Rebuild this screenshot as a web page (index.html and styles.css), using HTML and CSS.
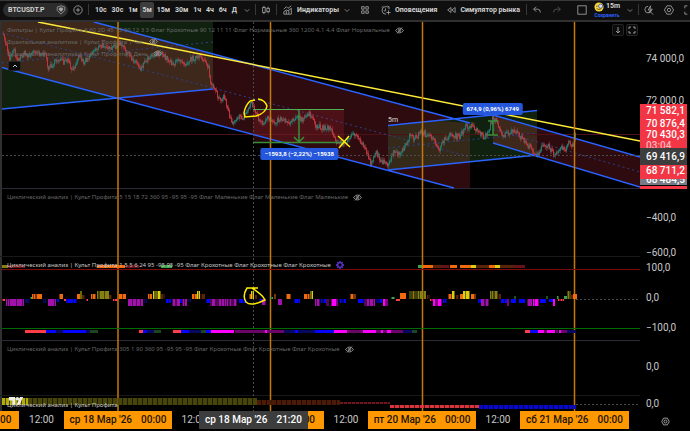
FILE: index.html
```html
<!DOCTYPE html>
<html lang="ru">
<head>
<meta charset="utf-8">
<title>BTCUSDT.P</title>
<link rel="stylesheet" href="styles.css">
</head>
<body>
<svg class="defs" aria-hidden="true">
  <symbol id="eye" viewBox="0 0 18 14"><path d="M1 7Q9-3 17 7Q9 17 1 7Z"/><circle cx="9" cy="7" r="2.5"/><path d="M4 13L14 1"/></symbol>
  <symbol id="chevron" viewBox="0 0 8 8"><path d="M1 3l3 3 3-3"/></symbol>
</svg>

<header class="toolbar">
  <button class="symbol"><span>BTCUSDT.P</span>
    <svg viewBox="0 0 12 12"><path d="M6 1l4.5 1.5v4L6 11 1.500 6.500v-4z"/><path class="solid" d="M3 5l1.500-2h3L9 5 6 8.500z"/></svg></button>
  <button aria-label="Добавить"><svg viewBox="0 0 12 12"><circle cx="6" cy="6" r="5"/><path d="M6 3.500v5M3.500 6h5"/></svg></button>
  <i class="divider"></i>
  <nav class="intervals">
    <button>10с</button><button>30с</button><button>1м</button><button class="active">5м</button><button>15м</button><button>30м</button><button>1ч</button><button>4ч</button><button>6ч</button><button>Д</button>
  </nav>
  <button class="chevron" aria-label="Интервалы"><svg><use href="#chevron"/></svg></button>
  <i class="divider"></i>
  <button aria-label="Свечи"><svg viewBox="0 0 12 12"><path d="M3.500 1v10M8.500 2v8"/><rect class="fill" x="2" y="3" width="3" height="6"/><rect class="fill" x="7" y="4" width="3" height="4"/></svg></button>
  <i class="divider"></i>
  <button class="labelled"><svg viewBox="0 0 12 12"><path d="M1 11V8l3-2 2 1 4-3v7zM1 5l3-3 2 2 4-3M4 7v4M7 7v4"/></svg><span>Индикаторы</span></button>
  <button class="chevron" aria-label="Избранные индикаторы"><svg><use href="#chevron"/></svg></button>
  <button aria-label="Шаблоны"><svg viewBox="0 0 12 12"><path d="M2 2h3v3H2zM7 2h3v3H7zM2 7h3v3H2zM7 7h3v3H7z"/></svg></button>
  <button class="labelled"><svg viewBox="0 0 12 12"><path d="M10 5A4.500 4.500 0 1 0 6 11M5.500 4v3H3.500M1 3l2-2M8 1l2.500 2M9 6.500v5M6.500 9h5"/></svg><span>Оповещения</span></button>
  <button class="labelled replay"><svg viewBox="0 0 12 12"><path d="M6 3v6L2 6zM11 3v6L7 6z"/></svg><span>Симулятор рынка</span></button>
  <i class="divider"></i>
  <button aria-label="Отменить"><svg viewBox="0 0 12 12"><path d="M5 2L2 5l3 3M2 5h5q3 0 3 4"/></svg></button>
  <button class="muted" aria-label="Повторить"><svg viewBox="0 0 12 12"><path d="M7 2l3 3-3 3M10 5H5Q2 5 2 9"/></svg></button>
  <span class="spacer"></span>
  <button aria-label="Макет"><svg viewBox="0 0 12 12"><rect x="1" y="1" width="10" height="10"/></svg></button>
  <button class="layout">
    <span class="layout-name"><svg viewBox="0 0 12 12"><circle cx="6" cy="6" r="5.500" fill="#f6d83b" stroke="none"/><path d="M2.500 5h2M3 8q3 2 6 0" stroke="#59400a"/><circle cx="8" cy="5" r="2.500" fill="#cfe0f4" stroke="#557"/></svg>15m</span>
    <span class="save">Сохранить</span>
  </button>
  <button class="chevron" aria-label="Макеты"><svg><use href="#chevron"/></svg></button>
  <i class="divider"></i>
  <button aria-label="Быстрый поиск"><svg viewBox="0 0 12 12"><path d="M5 1.500A4 4 0 1 0 9 6M8 8.500l3 3M8 1L5 6h3L6 9l4-4H7z"/></svg></button>
  <button aria-label="Настройки"><svg viewBox="0 0 12 12"><path d="M3.500 1h5L11.500 6l-3 5h-5L.5 6z"/><circle cx="6" cy="6" r="2"/></svg></button>
  <button aria-label="Во весь экран"><svg viewBox="0 0 12 12"><path d="M1 4V1h3M8 1h3v3M11 8v3H8M4 11H1V8"/></svg></button>
</header>

<main class="workspace">
  <section class="plot" aria-label="График">
    <svg class="canvas" viewBox="0 22 640 389" preserveAspectRatio="none">
      <g class="zones">
        <path class="zone-up" d="M2 22H213V89L2 109Z"/>
        <path class="zone-down" d="M118 98L213 54 470 123V188H454Z"/>
        <path class="zone-mix" d="M2 22H94L213 54V89L118 98 2 67Z"/>
        <path class="zone-up" d="M388 126L537 111V156L388 170Z"/>
        <path class="zone-olive" d="M388 126L440 121 470 123V162L388 170Z"/>
        <path class="zone-down" d="M537 128L640 157V187L537 156Z"/>
        <path class="zone-mix" d="M493 116L537 128V156L493 143Z"/>
      </g>
      <path class="pane-line" d="M0 188.500H640M0 340.500H640"/>
      <path class="pane-line faint" d="M0 256.500H640M0 395.500H640"/>
      <path class="price-line" d="M2 134.500H640"/>
      <path class="mid" d="M2 33L213 88 470 157M2 63L213 42M388 148L537 133M493 129L640 172"/>
      <rect class="measure-fill" x="253" y="109" width="91" height="33"/>
      <g id="candles"></g>
      <path class="trend" d="M94 22L470 123M2 67.500L454 188M2 109L213 89M388 125.500L537 110.500M388 170L537 155M493 115L640 157M493 143L640 187"/>
      <path class="signal" d="M38 22L640 141"/>
      <path class="cross" d="M2 155.500H640M253.500 22V411"/>
      <path class="cross" d="M576 299.500H640M576 404.500H640"/>
      <path class="session" d="M118 22V411M270.500 22V411M422.500 22V411M574.500 22V411"/>
      <path class="measure" d="M253 109.500H344"/>
      <path class="measure thick" d="M253 142.500H344M299 110V141M294 137L299 142 304 137"/>
      <path class="measure thick" d="M488 121H498M488 135H498M493 121V135"/>
      <path class="limit-top" d="M2 269.500H640"/>
      <path class="limit-bottom" d="M2 328.500H640"/>
      <g id="cycles"></g>
      <path class="pen" d="M250 101L255 100M258 99Q265 100 267 106 266 113 256 116L245 117 244 113Q245 106 250 101"/>
      <path class="pen" d="M258 288H247Q242 296 246 302 251 307 265 300 263 295 252 288"/>
      <path class="pen" d="M338 136L350 147M349 136L339 148"/>
    </svg>

    <p class="legend" style="top:2.1%">Фильтры | Культ Профита 6 60 2D 45 15 90 12 3 3 Флаг Крохотные 90 12 11 11 Флаг Нормальные 360 1200 4,1 4,4 Флаг Нормальные<svg><use href="#eye"/></svg></p>
    <p class="legend" style="top:5.100%">Фрактальная аналитика | Культ Профита | Час<svg><use href="#eye"/></svg></p>
    <p class="legend" style="top:8.200%">Фрактальная аналитика | Культ Профита | День<svg><use href="#eye"/></svg></p>
    <p class="legend" style="top:45%">Циклический анализ | Культ Профита 5 15 18 72 360 95 -95 95 -95 Флаг Маленькие Флаг Маленькие Флаг Маленькие<svg><use href="#eye"/></svg></p>
    <p class="legend bright" style="top:62.500%">Циклический анализ | Культ Профита 1 5 5 6 24 95 -95 95 -95 Флаг Крохотные Флаг Крохотные Флаг Крохотные<svg class="loading" viewBox="0 0 12 12"><circle cx="6" cy="6" r="3.500"/><path d="M6 0v2M6 10v2M0 6h2M10 6h2M2 2l1 1M9 9l1 1M10 2L9 3M3 9l-1 1"/></svg></p>
    <p class="legend" style="top:84.100%">Циклический анализ | Культ Профита 305 1 90 360 95 -95 95 -95 Флаг Крохотные Флаг Крохотные Флаг Крохотные<svg><use href="#eye"/></svg></p>
    <svg class="brand" viewBox="0 0 16 9" role="img" aria-label="TradingView"><path d="M0 0h7v9H4V4H0z"/><circle cx="9.500" cy="2" r="2"/><path d="M12.500 0H16l-4 9H8.500z"/></svg>
    <p class="legend bright" style="top:98.500%">Циклический анализ | Культ Профита</p>

    <span class="tag" style="left:46.600%;top:34%">−1593,8 (−2,22%) −15938</span>
    <span class="tag" style="left:76.900%;top:22.400%">674,9 (0,96%) 6749</span>
    <span class="note" style="left:61.300%;top:25.200%">5m</span>
    <button class="collapse" aria-label="Свернуть"><svg viewBox="0 0 8 8"><path d="M2 5l2-2 2 2"/></svg></button>
    <div class="pane-tools">
      <button aria-label="Вниз"><svg viewBox="0 0 8 8"><path d="M4 1v6M2 5l2 2 2-2"/></svg></button>
      <button aria-label="Развернуть"><svg viewBox="0 0 8 8"><path d="M1 3V1h2M5 1h2v2M7 5v2H5M3 7H1V5"/></svg></button>
    </div>
  </section>

  <aside class="prices" aria-label="Шкала цен">
    <span style="top:9.400%">74 000,0</span>
    <span style="top:20.300%">72 000,0</span>
    <span style="top:50.400%">−400,0</span>
    <span style="top:59.400%">−600,0</span>
    <span style="top:63.200%">100,0</span>
    <span style="top:71%">0,0</span>
    <span style="top:78.700%">−100,0</span>
    <span style="top:88.800%">0,0</span>
    <span style="top:98.100%">0,0</span>
    <div class="quotes">
      <b>71 582,1</b><b>70 876,4</b><b>70 430,3</b><b class="timer">03:04</b><b class="cursor">69 416,9</b><b>68 711,2</b><b class="gray">68 484,5</b><b class="edge"></b>
    </div>
  </aside>

  <footer class="times">
    <b class="first">00</b><span>12:00</span><b>ср 18 Мар '26<em>00:00</em></b><span>12:00</span><b class="last">00:00</b><span>12:00</span><b>пт 20 Мар '26<em>00:00</em></b><span>12:00</span><b>сб 21 Мар '26<em>00:00</em></b>
    <strong class="cursor-time">ср 18 Мар '26<em>21:20</em></strong>
  </footer>
  <button class="axis-settings" aria-label="Настройки шкалы"><svg viewBox="0 0 12 12"><path d="M3.500 1.500h5L11 6l-2.500 4.500h-5L1 6z"/><circle cx="6" cy="6" r="2"/></svg></button>
</main>
<script src="script.js"></script>
</body>
</html>
```
FILE: styles.css
```css
* { box-sizing: border-box; }
body {
  margin: 0;
  height: 100vh;
  display: flex;
  flex-direction: column;
  background: #000;
  color: #c8c8c8;
  font-family: Roboto, "Noto Sans", sans-serif;
  font-size: 7px;
  overflow: hidden;
}
.defs { position: absolute; width: 0; height: 0; }
svg { fill: none; stroke: currentColor; stroke-width: 1; }
button {
  border: 0;
  margin: 0;
  padding: 0;
  background: none;
  color: inherit;
  font: inherit;
  display: flex;
  align-items: center;
  justify-content: center;
}
p { margin: 0; }
em { font-style: normal; }

/* Toolbar */
.toolbar {
  display: flex;
  align-items: center;
  flex: none;
  height: 22px;
  padding: 0 0 2px 3px;
  background: #0f0f0f;
  border-top: 1px solid #3a3a3a;
  border-bottom: 2px solid #303030;
  font-weight: 700;
  color: #d2d2d2;
  white-space: nowrap;
  overflow: hidden;
}
.toolbar > * { flex: none; }
.toolbar > button { width: 20px; height: 14px; }
.toolbar svg { width: 10px; height: 10px; color: #a4a4a4; }
.toolbar .solid { fill: currentColor; stroke: none; }
.toolbar .fill { fill: #0f0f0f; }
.toolbar .symbol {
  width: 65px;
  padding: 0 2px 0 5px;
  justify-content: space-between;
  background: #2c2c2c;
  border-radius: 7px;
}
.divider { width: 1px; height: 11px; background: #383838; }
.intervals { display: flex; width: 150px; padding-left: 4px; justify-content: space-between; }
.intervals button { height: 16px; padding: 0 2px; border-radius: 2px; }
.intervals .active { background: #3d3d3d; }
.toolbar .chevron { width: 16px; }
.toolbar .chevron svg { width: 6px; height: 6px; }
.toolbar .labelled { width: auto; gap: 4px; padding-left: 6px; }
.toolbar .replay { padding: 0 6px 0 9px; }
.toolbar .muted { opacity: .5; }
.toolbar > .spacer { flex: 1 1 auto; }
.toolbar .layout { width: 30px; height: 18px; flex-direction: column; }
.toolbar > :last-child { margin-right: -9px; }
.layout-name { display: flex; align-items: center; gap: 2px; line-height: 9px; }
.save { color: #2962ff; font-size: 5px; line-height: 6px; }

/* Workspace */
.workspace {
  flex: 1;
  min-height: 0;
  display: grid;
  grid-template: minmax(0, 1fr) 20px / minmax(0, 1fr) 50px;
}
.plot { position: relative; border-left: 2px solid #303030; }
.canvas { position: absolute; inset: 0 0 0 -2px; width: calc(100% + 2px); height: 100%; stroke: none; }
.zone-up { fill: #10220f; }
.zone-down { fill: #2e0b0f; }
.zone-mix { fill: #3d281b; }
.zone-olive { fill: #35291a; }
.pane-line { stroke: #2a2a38; }
.faint { stroke: #191919; }
.price-line { stroke: #4c1218; }
.mid { stroke: #2b408e; stroke-dasharray: 2 3; }
.trend { stroke: #2962ff; stroke-width: 1.5; }
.signal { stroke: #ffeb3b; stroke-width: 1.5; }
.cross { stroke: #4c4c4c; stroke-dasharray: 2 2; }
.session { stroke: #c87808; stroke-width: 1.5; }
.measure { stroke: #4caf50; }
.thick { stroke: #388e3c; stroke-width: 1.5; }
.measure-fill { fill: #f23645; opacity: .15; }
.limit-top { stroke: #7b0b0b; }
.limit-bottom { stroke: #006b00; }
.pen { stroke: #ffee00; stroke-width: 1.5; }

.legend {
  position: absolute;
  left: 5px;
  display: flex;
  align-items: center;
  gap: 5px;
  transform: translateY(-50%);
  white-space: nowrap;
  line-height: 10px;
  font-family: "Noto Sans", sans-serif;
  font-size: 6px;
  color: #686868;
}
.legend svg { width: 9px; height: 7px; stroke-width: 2; color: #8c8c8c; }
.legend .loading { width: 8px; height: 8px; color: #5b35d5; }
.legend.bright { color: #c8c8c8; }
.tag {
  position: absolute;
  transform: translate(-50%, -50%);
  padding: 0 4px;
  border-radius: 2px;
  background: #2457dc;
  color: #fff;
  font-size: 6px;
  font-weight: 700;
  line-height: 12px;
  white-space: nowrap;
}
.note { position: absolute; transform: translate(-50%, -50%); color: #ddd; font-size: 7px; }
.collapse, .pane-tools button { background: #0b0b0b; border: 1px solid #252525; border-radius: 2px; }
.collapse { position: absolute; left: 6px; top: 10%; width: 13px; height: 10px; }
.collapse svg, .pane-tools svg { width: 8px; height: 8px; }
.pane-tools { position: absolute; top: 2px; right: 2px; display: flex; gap: 2px; }
.pane-tools button { width: 12px; height: 12px; color: #999; }
.brand { position: absolute; left: 6px; bottom: 6px; width: 16px; height: 8px; fill: #eee; stroke: none; }

/* Scales */
.prices { position: relative; font-size: 10px; line-height: 12px; overflow: hidden; }
.prices > span { position: absolute; left: 6px; transform: translateY(-50%); white-space: nowrap; }
.quotes {
  position: absolute;
  top: 21%;
  width: 47px;
  display: flex;
  flex-direction: column;
  color: #fff;
}
.quotes b {
  padding-left: 6px;
  height: 11px;
  line-height: 11px;
  overflow: hidden;
  font-weight: 500;
  background: #f23645;
  white-space: nowrap;
}
.quotes b:first-child { height: 14px; line-height: 14px; }
.quotes .timer { height: 8px; color: #f9b5bb; }
.quotes .cursor { height: 17px; line-height: 17px; background: #3d3d3d; }
.quotes .cursor + b { height: 14px; }
.quotes .gray { height: 6px; line-height: 2px; background: #787b86; }
.quotes .edge { height: 3px; margin-top: 1px; }

.times {
  position: relative;
  display: grid;
  grid-template-columns: 19fr 45fr 108fr 44fr 108fr 44fr 108fr 44fr 109fr 11fr;
  height: 18px;
  overflow: hidden;
  font-size: 10px;
  line-height: 18px;
  text-align: center;
  white-space: nowrap;
}
.times b { background: #ff9800; color: #1c1303; font-weight: 500; }
.times em { margin-left: 9px; }
.times .first { text-align: left; }
.times .last { text-align: right; padding-right: 9px; }
.cursor-time {
  position: absolute;
  left: 31.1%;
  width: 17%;
  background: #3d3d3d;
  color: #fff;
  font-weight: 500;
}
.axis-settings svg { width: 9px; height: 9px; }
```
FILE: script.js
```js
const NS = 'http://www.w3.org/2000/svg';
function rect(parent, x, y, w, h, fill) {
  const r = document.createElementNS(NS, 'rect');
  r.setAttribute('x', x);
  r.setAttribute('y', y);
  r.setAttribute('width', w);
  r.setAttribute('height', h);
  r.setAttribute('fill', fill);
  parent.appendChild(r);
}
let seed = 7;
function random() {
  seed = (seed * 16807) % 2147483647;
  return seed / 2147483647;
}

/* Price path: x, y pairs that the candles follow */
const path = [3,34,7,45,10,58,14,48,18,60,24,53,30,55,36,50,42,53,46,55,49,68,55,62,60,58,64,63,68,60,73,71,77,60,80,54,84,62,90,55,96,48,102,46,106,44,110,50,115,46,120,43,126,50,132,58,137,62,141,68,146,60,152,54,158,52,164,55,170,60,175,64,180,58,186,63,192,58,200,57,206,60,209,68,211,82,215,90,220,98,225,97,230,115,233,122,238,116,243,118,248,110,252,101,256,112,260,120,264,125,268,118,275,121,282,118,290,122,296,116,303,120,310,112,316,126,325,127,332,128,336,142,342,142,347,143,352,132,360,140,366,148,371,163,376,152,382,160,388,166,394,152,400,154,405,148,410,135,415,138,422,131,428,135,434,140,440,148,446,138,452,134,460,137,466,126,472,125,478,130,485,137,489,130,493,118,498,122,503,135,510,132,516,132,522,137,527,143,531,148,537,155,543,146,549,146,554,154,560,147,566,148,570,142,574,146,576,133];
const candles = document.getElementById('candles');
let last = path[1];
for (let i = 0; i < path.length - 2; i += 2) {
  const [x0, y0, x1, y1] = path.slice(i, i + 4);
  for (let x = x0; x < x1; x += 1) {
    const y = y0 + (y1 - y0) * (x + 1 - x0) / (x1 - x0) + (random() - .5) * 5;
    const color = y > last ? '#b8383f' : '#24776e';
    const top = Math.min(y, last);
    const size = Math.abs(y - last);
    rect(candles, x + .2, top - random() * 3, .5, size + 4, color);
    rect(candles, x, top, 1, size + 1, color);
    last = y;
  }
}

const cycles = document.getElementById('cycles');
const colors = {
  o: '#f26a0c', y: '#d8d010', l: '#858010', n: '#592408', r: '#ff3d48', d: '#641418',
  g: '#3fa34d', k: '#1d4620', b: '#0505ff', v: '#080860', m: '#ff00ff', p: '#6a0668', u: '#a012aa'
};
function strip(y, h, items) {
  items.split(' ').forEach(item => {
    const [key, a, b] = item.split(',');
    rect(cycles, +a, y, b - a, h, colors[key]);
  });
}
strip(265, 3, 'l,2,8 d,8,25 o,97,125 d,126,139 g,161,172 g,418,422 o,422,433 n,433,441 d,441,449 o,450,457 o,460,471 y,471,476 n,476,489 o,489,495 y,495,500 n,500,513 d,513,525');
strip(330, 3, 'r,25,46 b,46,56 v,56,63 b,63,86 v,86,90 k,90,98 r,139,143 b,143,147 v,147,154 k,154,161 r,173,181 b,181,189 v,189,201 k,201,206 b,206,211 m,211,234 p,235,265 m,265,267 p,267,284 v,284,295 b,295,298 v,298,315 b,315,334 m,334,347 p,347,363 m,363,376 p,376,381 m,381,383 p,383,387 m,387,391 p,391,403 v,403,412 k,412,417 r,525,530 b,530,538 m,538,544 p,544,547 m,547,555 p,556,558 m,559,561 p,561,567 v,567,576');

/* Histogram: colour, start, end, height above (+) or below (-) zero */
'r,2,5,-2 u,6,24,-7 v,25,30,-4 g,30,32,2 o,32,42,5 v,43,47,-4 u,48,56,-7 b,57,59,-3 o,59,63,5 r,64,66,-2 b,66,77,-4 o,77,80,5 y,80,82,8 n,82,85,4 r,86,88,-2 o,91,96,5 l,97,109,8 n,109,112,4 r,113,118,-2 o,119,126,5 u,128,143,-7 v,144,147,-4 o,148,152,5 y,153,161,8 n,161,165,5 b,166,171,-4 u,172,180,-7 b,180,182,-4 u,182,187,-7 v,188,191,-3 o,192,197,5 y,197,200,8 n,200,205,5 b,206,210,-4 u,210,237,-7 b,239,246,-4 o,249,251,5 y,251,254,8 n,255,257,4 b,259,262,-3 u,262,266,-6 g,270,273,2 o,274,276,5 u,278,282,-6 o,286,291,5 b,294,300,-4 o,304,310,5 y,310,313,8 u,315,320,-7 b,321,326,-4 u,326,329,-7 m,331,338,-7 b,339,346,-4 o,350,356,5 b,358,364,-4 u,364,375,-7 b,376,382,-4 m,383,388,-7 g,391,395,2 r,396,400,-2 o,400,406,6 l,409,426,8 n,427,430,4 r,430,433,-2 m,433,442,-7 b,443,447,-4 o,448,452,5 y,452,455,8 n,456,459,4 o,460,463,5 y,463,470,8 o,471,476,5 b,478,481,-4 u,481,489,-7 l,490,498,8 n,498,501,5 b,501,507,-4 m,507,509,-7 b,511,516,-4 g,514,516,3 b,519,525,-4 u,527,532,-7 m,533,539,-7 b,540,546,-4 g,546,548,3 b,549,553,-3 m,553,555,-7 g,557,559,3 r,558,564,-2 g,564,567,3 l,567,571,8 n,571,573,4 o,573,577,5'.split(' ').forEach(item => {
  const [key, a, b, h] = item.split(',');
  for (let x = +a; x < +b; x += 1) {
    const height = Math.abs(h);
    rect(cycles, x, h > 0 ? 299 - height : 299, random() > .35 ? 1 : .5, height, colors[key]);
  }
});

/* Long-period blocks in the lowest pane */
[[2, 28, 4, 398, 7, '#b3ab08'], [28, 257, 5, 398, 7, '#48450a'], [257, 340, 5, 400, 5, '#4b1b08'], [340, 390, 4, 402, 2, '#6e181d'], [390, 479, 5, 405, 3, '#d9353c'], [479, 576, 5, 405, 4, '#0808c8']].forEach(([a, b, step, y, h, color]) => {
  for (let x = a; x < b; x += step) rect(cycles, x, y, Math.min(step - .6, b - x), h, color);
});
```
